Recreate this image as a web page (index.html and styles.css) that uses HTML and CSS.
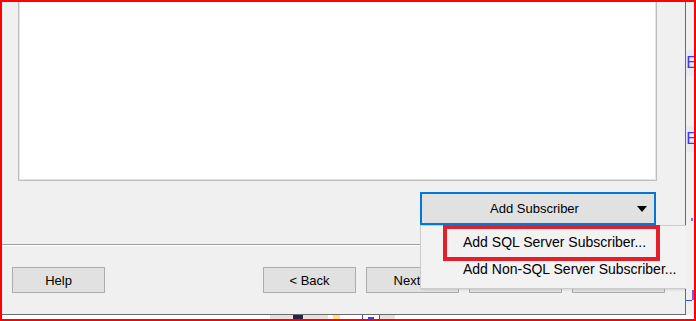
FILE: index.html
```html
<!DOCTYPE html>
<html>
<head>
<meta charset="utf-8">
<link rel="stylesheet" href="styles.css">
</head>
<body>
<div class="screen">
  <div class="window">
    <div class="list"></div>
    <div class="add-row">
      <button class="split"><span></span><span class="split-label">Add Subscriber</span><span class="caret"></span></button>
    </div>
    <div class="sep"></div>
    <div class="nav">
      <button class="btn">Help</button>
      <div class="nav-right">
        <button class="btn">&lt; Back</button>
        <button class="btn">Next &gt;</button>
        <button class="btn">Finish</button>
        <button class="btn">Cancel</button>
      </div>
    </div>
    <div class="menu">
      <div class="menu-item">Add SQL Server Subscriber...</div>
      <div class="menu-item">Add Non-SQL Server Subscriber...</div>
      <div class="highlight"></div>
    </div>
  </div>
  <div class="side">
    <div class="frag frag-1">El</div>
    <div class="frag frag-2">E</div>
    <div class="mark mark-1"></div>
    <div class="mark mark-2"></div>
    <div class="mark mark-3"></div>
  </div>
  <div class="taskbar">
    <span class="tb tb-gray1"></span>
    <span class="tb tb-navy"></span>
    <span class="tb tb-gray2"></span>
    <span class="tb tb-yellow"></span>
    <span class="tb tb-box"><i></i></span>
    <span class="tb tb-gray3"></span>
  </div>
</div>
</body>
</html>
```

FILE: styles.css
```css
* { box-sizing: border-box; }
html, body { margin: 0; padding: 0; background: #ffffff; }
body {
  font-family: "Liberation Sans", Arial, sans-serif;
  color: #000;
}
.screen {
  width: 696px;
  height: 321px;
  border: 2px solid #ff0000;
  display: grid;
  grid-template-columns: 684px 8px;
  grid-template-rows: 313px 4px;
  background: #f0f0f0;
  overflow: hidden;
}
.window {
  position: relative;
  background: #f0f0f0;
  border-right: 1px solid #6a6a6a;
  border-bottom: 1px solid #6a6a6a;
  display: flex;
  flex-direction: column;
}
.list {
  margin-left: 16px;
  width: 639px;
  height: 179px;
  background: #ffffff;
  border: 1px solid #bdbdbd;
  border-top: none;
  box-shadow: inset 1px 0 #e4e4e4, inset -1px 0 #e4e4e4, inset 0 -1px #e4e4e4;
}
.add-row {
  margin-top: 11px;
  display: flex;
  justify-content: flex-end;
  padding-right: 29px;
}
.split {
  width: 236px;
  height: 33px;
  border: 2px solid #0078d7;
  background: #e1e1e1;
  font-family: inherit;
  font-size: 13px;
  color: #000;
  padding: 0 7px 0 0;
  display: grid;
  grid-template-columns: 1fr auto 1fr;
  align-items: center;
}
.caret {
  justify-self: end;
  width: 0;
  height: 0;
  border-left: 5px solid transparent;
  border-right: 5px solid transparent;
  border-top: 6px solid #000;
}
.sep {
  margin-top: 19px;
  height: 2px;
  border-top: 1px solid #a0a0a0;
  border-bottom: 1px solid #ffffff;
}
.nav {
  margin-top: 21px;
  display: flex;
  padding-left: 10px;
  padding-right: 20px;
}
.nav-right {
  margin-left: auto;
  display: flex;
  gap: 10px;
}
.btn {
  width: 93px;
  height: 26px;
  background: #e1e1e1;
  border: 1px solid #adadad;
  font-family: inherit;
  font-size: 13px;
  color: #000;
  padding: 0;
}
.menu {
  position: absolute;
  left: 418px;
  top: 223px;
  width: 267px;
  height: 64px;
  background: #f2f2f2;
  border: 1px solid #cccccc;
  padding-top: 3px;
  box-shadow: 1px 1px 2px rgba(0,0,0,0.12);
}
.menu-item {
  height: 27px;
  line-height: 27px;
  padding-left: 42px;
  font-size: 14px;
  white-space: nowrap;
  color: #000;
}
.highlight {
  position: absolute;
  left: 22px;
  top: -1px;
  width: 217px;
  height: 36px;
  border: 4px solid #e3202a;
}
.side {
  background: #f0f0f0;
  position: relative;
  overflow: hidden;
}
.frag {
  position: absolute;
  left: 0;
  width: 8px;
  height: 26px;
  background: #e7eaf2;
  color: #3a3aff;
  font-family: "DejaVu Sans", sans-serif;
  font-size: 16px;
  line-height: 26px;
  white-space: nowrap;
  overflow: hidden;
}
.frag-1 { top: 48px; }
.frag-2 { top: 124px; }
.mark { position: absolute; }
.mark-1 { top: 216px; left: 5px; width: 2px; height: 3px; background: #8a6ad8; }
.mark-2 { top: 288px; left: 6px; width: 2px; height: 10px; background: #7a5ae0; }
.mark-3 { top: 298px; left: 0; width: 6px; height: 1px; background: #3050e0; }
.taskbar {
  grid-column: 1 / span 2;
  background: #ffffff;
  display: flex;
  align-items: stretch;
}
.tb { display: block; }
.tb-gray1 { margin-left: 268px; width: 23px; background: #e2e2e2; }
.tb-navy { width: 10px; background: #1e2844; }
.tb-gray2 { width: 25px; background: #e2e2e2; }
.tb-yellow { margin-left: 5px; width: 7px; background: #ffe27a; }
.tb-box {
  margin-left: 22px;
  width: 18px;
  border-left: 1px solid #3050e0;
  border-right: 1px solid #3050e0;
  display: flex;
  justify-content: center;
  align-items: flex-end;
}
.tb-box i { display: block; width: 6px; height: 2px; background: #3050e0; }
.tb-gray3 { width: 15px; background: #e2e2e2; }
```
